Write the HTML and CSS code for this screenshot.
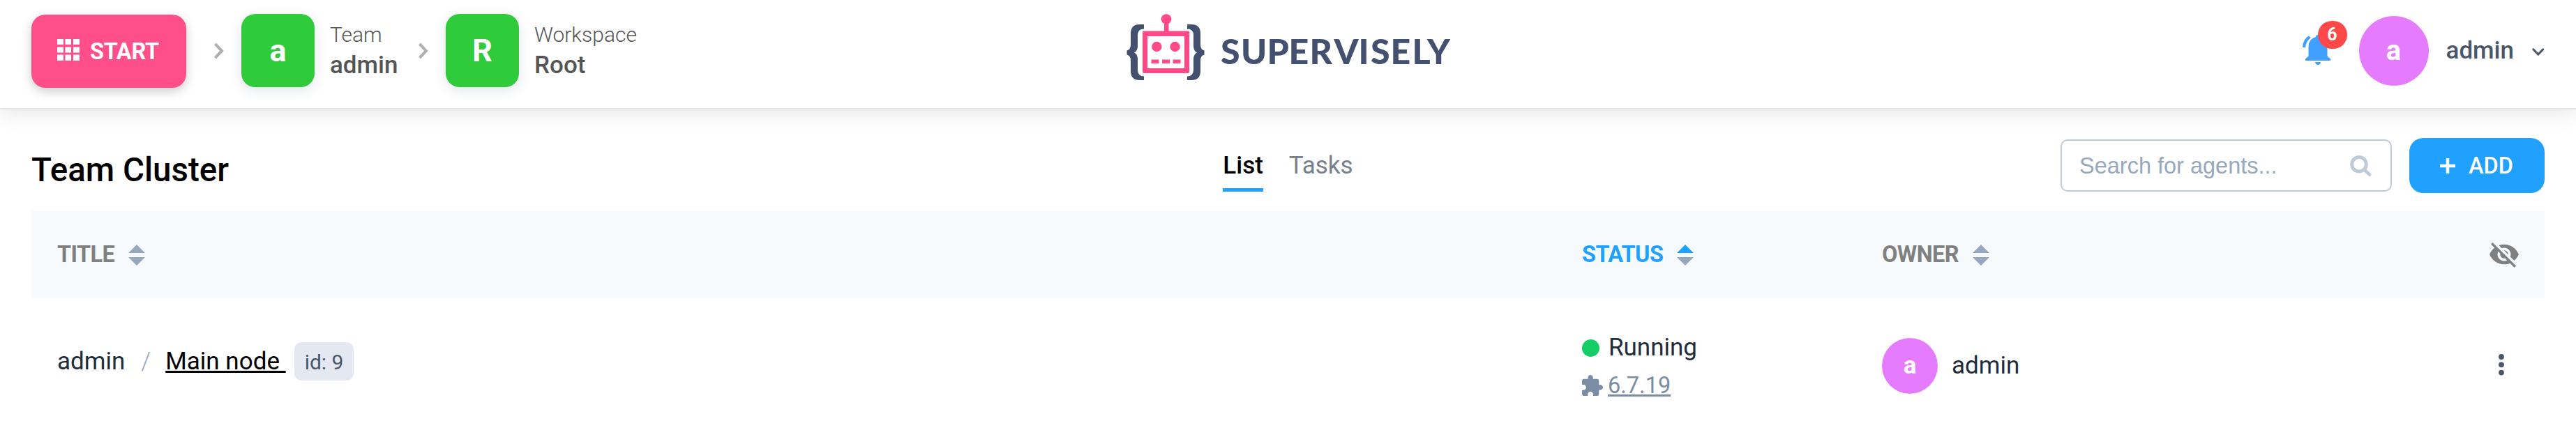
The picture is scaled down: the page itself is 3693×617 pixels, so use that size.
FILE: index.html
```html
<!DOCTYPE html>
<html lang="en">
<head>
<meta charset="utf-8">
<title>Team Cluster</title>
<link rel="stylesheet" href="styles.css">
</head>
<body>
<header class="header">
  <nav class="crumbs">
    <button class="start">
      <svg class="start-icon" viewBox="0 0 32 31"><path d="M0 0h9v8H0zM11.500 0h8.500v8h-8.500zM23 0h9v8h-9zM0 11.500h9v8H0zM11.500 11.500h8.500v8h-8.500zM23 11.500h9v8h-9zM0 22.500h9V31H0zM11.500 22.500h8.500V31h-8.500zM23 22.500h9V31h-9z" fill="#fff"/></svg>
      <span>START</span>
    </button>
    <svg class="sep sep-first" viewBox="0 0 14 24"><path d="M1.500 2 11 12l-9.500 10" fill="none" stroke="#b0b0b0" stroke-width="4"/></svg>
    <span class="tile">a</span>
    <div class="crumb crumb-team"><span class="crumb-kind">Team</span><span class="crumb-name">admin</span></div>
    <svg class="sep" viewBox="0 0 14 24"><path d="M1.500 2 11 12l-9.500 10" fill="none" stroke="#b0b0b0" stroke-width="4"/></svg>
    <span class="tile">R</span>
    <div class="crumb"><span class="crumb-kind">Workspace</span><span class="crumb-name">Root</span></div>
  </nav>
  <svg class="logo" viewBox="0 0 466 96">
    <g fill="#435070">
      <path id="brace" d="M26 15v6.500q-9 0-9 9V46q0 7-5 9.500Q17 58 17 65v15q0 9.500 9 9.500V95H20Q7 95 7 82V67q0-7.500-5.500-8.500v-6Q7 51.500 7 44V28Q7 15 20 15z"/>
      <use href="#brace" transform="translate(114 0) scale(-1 1)"/>
    </g>
    <g fill="#ff4a87">
      <circle cx="58" cy="7.500" r="7.300"/>
      <path d="M55 12h6.500v14H55z"/>
      <path fill-rule="evenodd" d="M26 24.500h63q2 0 2 2V83q0 2-2 2H26q-2 0-2-2V26.500q0-2 2-2zM31 32v46h53V32z"/>
      <circle cx="44.300" cy="47" r="7.200"/><circle cx="70.500" cy="47" r="7.200"/>
      <path d="M36.500 65.500h11V71h-11zM52 65.500h11V71H52zM67.500 65.500h11V71h-11z"/>
    </g>
    <text class="wordmark" x="136 165 202.500 233.500 263.500 298.500 333.500 351 379.500 410.500 432" y="71.500">SUPERVISELY</text>
  </svg>
  <div class="account">
    <div class="bell">
      <svg viewBox="0 0 41 42"><path fill="#409fff" d="M19 2q0-3 3-3t3 3q10.500 3 10.500 14v13.500l4.500 4V36H4v-2.500l4.500-4V16Q8.500 5 19 2zM18 38h8q-.5 4-4 4t-4-4zM0 17Q0 7 8.500.5L12 3Q5 8 4 17z"/></svg>
      <span class="badge">6</span>
    </div>
    <span class="avatar avatar-lg">a</span>
    <span class="user">admin</span>
    <svg class="caret" viewBox="0 0 18 12"><path d="m1.800 1.800 7 7.200 7-7.200" fill="none" stroke="#48576a" stroke-width="3" stroke-linecap="round"/></svg>
  </div>
</header>
<main class="page">
  <div class="toolbar">
    <h1 class="title">Team Cluster</h1>
    <div class="tabs"><a class="tab tab-active">List</a><a class="tab">Tasks</a></div>
    <div class="actions">
      <label class="search">
        <span>Search for agents...</span>
        <svg viewBox="0 0 31 30"><circle cx="13" cy="12.800" r="10.300" fill="none" stroke="#bfcbd9" stroke-width="5"/><path d="m20.500 20.500 7.500 7" stroke="#bfcbd9" stroke-width="5" stroke-linecap="round"/></svg>
      </label>
      <button class="add">
        <svg viewBox="0 0 22 22"><path d="M11 0v22M0 11h22" stroke="#fff" stroke-width="4.500"/></svg>
        <span>ADD</span>
      </button>
    </div>
  </div>
  <section class="table">
    <div class="row row-head">
      <div class="th"><span>TITLE</span><svg class="sort" viewBox="0 0 24 30"><path d="M0 12 12 0l12 12zM0 18h24L12 30z" fill="#97a8be"/></svg></div>
      <div class="th th-active"><span>STATUS</span><svg class="sort" viewBox="0 0 24 30"><path d="M0 12 12 0l12 12z" fill="#20a0ff"/><path d="M0 18h24L12 30z" fill="#97a8be"/></svg></div>
      <div class="th"><span>OWNER</span><svg class="sort" viewBox="0 0 24 30"><path d="M0 12 12 0l12 12zM0 18h24L12 30z" fill="#97a8be"/></svg></div>
      <div class="th"><svg class="eye" viewBox="1 2.500 22 19.500"><path fill="#808080" d="M12 7c2.760 0 5 2.240 5 5 0 .65-.13 1.260-.36 1.830l2.920 2.920c1.510-1.260 2.700-2.890 3.430-4.750-1.730-4.390-6-7.500-11-7.500-1.400 0-2.740.25-3.980.7l2.160 2.160C10.740 7.130 11.350 7 12 7zM2 4.270l2.280 2.280.46.46C3.080 8.300 1.780 10.020 1 12c1.730 4.390 6 7.500 11 7.500 1.550 0 3.030-.3 4.380-.84l.42.42L19.730 22 21 20.730 3.270 3 2 4.270zM7.530 9.800l1.550 1.550c-.05.21-.08.43-.08.65 0 1.660 1.340 3 3 3 .22 0 .44-.03.65-.08l1.550 1.550c-.67.33-1.410.53-2.200.53-2.760 0-5-2.240-5-5 0-.79.2-1.530.53-2.200zm4.310-.78 3.150 3.150.02-.16c0-1.660-1.340-3-3-3l-.17.01z"/></svg></div>
    </div>
    <div class="row row-body">
      <div class="cell cell-title"><span class="host">admin</span><span class="slash">/</span><a class="node">Main node </a><span class="tag">id: 9</span></div>
      <div class="cell cell-status">
        <div class="state"><i class="dot"></i>Running</div>
        <div class="version"><svg viewBox="2 1 21 21"><path fill="#7b8da4" d="M20.500 11H19V7c0-1.100-.9-2-2-2h-4V3.500C13 2.120 11.880 1 10.500 1S8 2.120 8 3.500V5H4c-1.100 0-1.990.9-1.990 2v3.800H3.500c1.490 0 2.700 1.210 2.700 2.700s-1.210 2.700-2.700 2.700H2V20c0 1.100.9 2 2 2h3.800v-1.500c0-1.490 1.210-2.700 2.700-2.700 1.490 0 2.700 1.210 2.700 2.700V22H17c1.100 0 2-.9 2-2v-4h1.500c1.380 0 2.500-1.120 2.500-2.500S21.880 11 20.500 11z"/></svg><a>6.7.19</a></div>
      </div>
      <div class="cell cell-owner"><span class="avatar">a</span><span>admin</span></div>
      <div class="cell"><svg class="more" viewBox="0 0 8 31"><g fill="#48576a"><circle cx="4" cy="4" r="3.900"/><circle cx="4" cy="15.300" r="3.900"/><circle cx="4" cy="26.600" r="3.900"/></g></svg></div>
    </div>
  </section>
</main>
</body>
</html>
```
FILE: styles.css
```css
* { box-sizing: border-box; }
body { margin: 0; background: #fff; font-family: Roboto, sans-serif; font-size: 35px; line-height: 42px; color: #1f2d3d; }
svg { display: block; flex: none; overflow: visible; }
button { border: 0; font: inherit; color: #fff; }

.header { display: grid; grid-template-columns: 1fr auto 1fr; height: 157px; padding: 0 45px; border-bottom: 2px solid #dfe4e9; box-shadow: 0 5px 30px rgba(0, 0, 0, .1); background: #fff; }
.crumbs { display: flex; align-items: flex-start; padding-top: 20px; }
.start { display: flex; align-items: center; gap: 15px; width: 222px; height: 105px; margin-top: 1px; padding: 0 0 0 37px; border-radius: 20px; background: #ff4f8b; box-shadow: 0 5px 15px rgba(0, 0, 0, .2); font-size: 32.5px; font-weight: 700; letter-spacing: -.3px; }
.start-icon { width: 32px; height: 31px; margin-top: -5px; }
.sep { width: 14px; height: 24px; margin: 41px 0 0 31px; }
.sep-first { margin-left: 40px; }
.tile { display: flex; align-items: center; justify-content: center; width: 105px; height: 105px; margin-left: 25px; border-radius: 20px; background: #30cb3a; box-shadow: 0 5px 18px rgba(60, 80, 110, .14); color: #fff; font-size: 45px; font-weight: 700; }
.crumb { display: flex; flex-direction: column; margin: 9px 0 0 22px; color: #555; }
.crumb-team { width: 96px; }
.crumb-kind { font-size: 30px; font-weight: 300; line-height: 42px; }
.crumb-name { font-weight: 500; line-height: 46px; }
.logo { width: 466px; height: 96px; margin-top: 20px; }
.wordmark { font-family: Lato, sans-serif; font-size: 50px; font-weight: 900; fill: #435070; }
.account { display: flex; align-items: flex-start; justify-content: flex-end; padding-top: 23px; color: #48576a; }
.bell { position: relative; width: 41px; margin: 28px 40px 0 0; }
.bell svg { width: 41px; height: 42px; }
.badge { position: absolute; left: 22px; top: -21px; width: 42px; height: 40px; border-radius: 20px; background: #ff4949; color: #fff; font-size: 25px; font-weight: 700; line-height: 39px; text-align: center; }
.avatar { display: flex; align-items: center; justify-content: center; width: 80px; height: 80px; border-radius: 50%; background: #e57bff; color: #fff; font-size: 35px; font-weight: 700; }
.avatar-lg { width: 100px; height: 100px; font-size: 40px; }
.user { margin: 29px 26px 0 25px; font-weight: 500; }
.caret { width: 18px; height: 12px; margin-top: 46px; }

.page { padding: 0 45px; }
.toolbar { display: grid; grid-template-columns: 1fr auto 1fr; height: 146px; }
.title { margin: 59px 0 0; font-size: 47.5px; font-weight: 500; line-height: 56px; color: #000; }
.tabs { display: flex; align-items: flex-start; gap: 37px; padding-top: 60px; }
.tab { height: 58px; line-height: 42px; color: #77808c; }
.tab-active { border-bottom: 5px solid #20a0ff; color: #000; font-weight: 500; }
.actions { display: flex; align-items: flex-start; justify-content: flex-end; gap: 25px; padding-top: 41px; }
.search { display: flex; align-items: center; justify-content: space-between; width: 475px; height: 75px; margin-top: 2px; padding: 0 27px 0 25px; border: 2px solid #bfcbd9; border-radius: 10px; color: #97a8be; font-family: "Liberation Sans", sans-serif; font-size: 32.5px; }
.search svg { width: 31px; height: 30px; }
.add { display: flex; align-items: center; gap: 19px; width: 194px; height: 79px; padding: 0 0 0 44px; border-radius: 20px; background: #20a0ff; font-size: 32.5px; font-weight: 500; }
.add svg { width: 22px; height: 22px; }

.row { display: grid; grid-template-columns: 2186px 430px 871px 1fr; padding-left: 37px; }
.row-head { height: 125px; align-items: center; background: #f6fafd; }
.th { display: flex; align-items: center; gap: 20px; color: #808080; font-size: 32.5px; font-weight: 700; letter-spacing: -.6px; }
.th > span { margin-top: -2px; }
.th-active { color: #20a0ff; }
.sort { width: 24px; height: 30px; }
.eye { width: 42px; height: 37px; }
.cell-title { display: flex; align-items: flex-start; padding-top: 70px; }
.slash { margin: 0 21px 0 23px; color: #97a8be; font-weight: 300; }
.node { white-space: pre; color: #000; text-decoration: underline; text-decoration-thickness: 3px; }
.tag { height: 55px; margin: -7px 0 0 12px; padding: 0 15px; border-radius: 10px; background: #e4e8f1; color: #48576a; font-size: 30px; line-height: 57px; }
.cell-status { padding-top: 50px; }
.state { display: flex; align-items: center; gap: 13px; }
.dot { width: 25px; height: 25px; border-radius: 50%; background: #13ce66; }
.version { display: flex; align-items: center; gap: 7px; margin-top: 12px; color: #7b8da4; font-size: 32.5px; text-decoration: underline; }
.version svg { width: 30px; height: 30px; }
.cell-owner { display: flex; align-items: center; gap: 20px; height: 80px; margin-top: 57px; }
.more { width: 8px; height: 31px; margin: 80px 0 0 13px; }
```
